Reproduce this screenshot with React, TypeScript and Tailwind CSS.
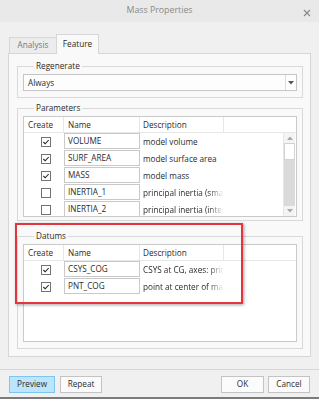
import React from 'react';

interface Row {
  on: boolean;
  name: string;
  desc: string;
  fade?: boolean;
}

const parameters: Row[] = [
  { on: true, name: 'VOLUME', desc: 'model volume' },
  { on: true, name: 'SURF_AREA', desc: 'model surface area' },
  { on: true, name: 'MASS', desc: 'model mass' },
  { on: false, name: 'INERTIA_1', desc: 'principal inertia (smallest)', fade: true },
  { on: false, name: 'INERTIA_2', desc: 'principal inertia (intermediate)', fade: true },
];

const datums: Row[] = [
  { on: true, name: 'CSYS_COG', desc: 'CSYS at CG, axes: principal', fade: true },
  { on: true, name: 'PNT_COG', desc: 'point at center of mass', fade: true },
];

function Check({ on }: { on: boolean }) {
  return (
    <svg width="10" height="10" viewBox="0 0 10 10" className="block">
      <rect x="0.5" y="0.5" width="9" height="9" fill="#fff" stroke="#737373" />
      {on && <polyline points="2.4,5 4.2,6.8 7.7,3" fill="none" stroke="#222" strokeWidth="1.1" />}
    </svg>
  );
}

function Group({ label, children, className }: { label: string; children: React.ReactNode; className?: string }) {
  return (
    <fieldset className={`border border-[#d9d9d9] px-[5px] ${className ?? ''}`}>
      <legend className="ml-[11px] px-[2px] leading-[12px] text-[#2b2b2b]">{label}</legend>
      {children}
    </fieldset>
  );
}

function PropTable({ rows, bodyH, scroll }: { rows: Row[]; bodyH: string; scroll?: boolean }) {
  return (
    <div className="mt-[2px] border border-[#c9c9c9] bg-white">
      {/* header */}
      <div className="flex h-[16px] items-center border-b border-[#e6e6e6] text-[#2b2b2b]">
        <div className="w-[40px] h-full border-r border-[#e6e6e6] pl-[4px] leading-[16px]">Create</div>
        <div className="w-[76px] h-full border-r border-[#e6e6e6] pl-[4px] leading-[16px]">Name</div>
        <div className="w-[84px] h-full border-r border-[#e6e6e6] pl-[3px] leading-[16px]">Description</div>
        <div className="flex-1" />
      </div>
      {/* body */}
      <div className={`flex ${bodyH} overflow-hidden`}>
        <div className="flex-1">
          {rows.map((r) => (
            <div key={r.name} className="flex h-[17px]">
              <div className="w-[40px] flex items-center justify-center pl-[4px]">
                <Check on={r.on} />
              </div>
              <div className="w-[76px] h-[16px] border border-[#c9c9c9] bg-white pl-[3px] leading-[14px] text-[#2b2b2b]">
                {r.name}
              </div>
              <div
                className={`w-[84px] overflow-hidden whitespace-nowrap pl-[3px] leading-[17px] text-[#2b2b2b] ${
                  r.fade ? '[mask-image:linear-gradient(to_right,black_82%,transparent)]' : ''
                }`}
              >
                {r.desc}
              </div>
            </div>
          ))}
        </div>
        {scroll && (
          <div className="w-[12px] mr-[1px] flex flex-col border-l border-[#e6e6e6] bg-[#f4f4f4]">
            <div className="h-[10px] flex items-center justify-center">
              <svg width="6" height="4" viewBox="0 0 6 4"><polygon points="0,4 6,4 3,0.5" fill="#a8a8a8" /></svg>
            </div>
            <div className="h-[17px] border border-[#d2d2d2] bg-white" />
            <div className="flex-1 bg-[#dadada]" />
            <div className="h-[10px] flex items-center justify-center">
              <svg width="6" height="4" viewBox="0 0 6 4"><polygon points="0,0 6,0 3,3.5" fill="#a8a8a8" /></svg>
            </div>
          </div>
        )}
      </div>
    </div>
  );
}

function Button({ children, primary, w }: { children: React.ReactNode; primary?: boolean; w: string }) {
  return (
    <div
      className={`${w} h-[17px] flex items-center justify-center border text-[#2b2b2b] ${
        primary ? 'bg-[#bde5fc] border-[#7ec6f2]' : 'bg-[#fbfbfb] border-[#c3c3c3]'
      }`}
    >
      {children}
    </div>
  );
}

export default function App() {
  return (
    <div
      className="relative w-[319px] h-[399px] overflow-hidden bg-[#f0f0f0] flex flex-col text-[8.2px]"
      style={{ fontFamily: '"Open Sans", "Noto Sans", sans-serif' }}
    >
      {/* Title bar */}
      <div className="h-[22px] shrink-0 bg-[#e9e9e9] flex items-center justify-center relative">
        <span className="text-[8.8px] text-[#8a8a8a]">Mass Properties</span>
        <svg width="8" height="8" viewBox="0 0 8 8" className="absolute right-[8px] top-[9px]">
          <path d="M1 1 L7 7 M7 1 L1 7" stroke="#8a8a8a" strokeWidth="1.2" />
        </svg>
      </div>

      {/* Tabs */}
      <div className="flex items-end pt-[12px] pl-[9px]">
        <div className="w-[47px] h-[16px] border border-b-0 border-r-0 border-[#d6d6d6] bg-[#ececec] text-[#777] flex items-center justify-center">
          Analysis
        </div>
        <div className="relative z-10 -mb-px w-[43px] h-[20px] border border-b-0 border-[#d6d6d6] bg-[#f9f9f9] text-[#2b2b2b] flex items-center justify-center">
          Feature
        </div>
      </div>

      {/* Tab panel */}
      <div className="mx-[8px] border border-[#d6d6d6] bg-[#f9f9f9] pl-[8px] pr-[7px] pt-[6px] pb-[7px]">
        <Group label="Regenerate" className="pb-[6px]">
          <div className="mt-[2px] h-[17px] flex border border-[#c6c6c6] bg-[#fdfdfd] text-[#2b2b2b]">
            <div className="flex-1 pl-[4px] leading-[15px]">Always</div>
            <div className="w-[11px] border-l border-[#dcdcdc] flex items-center justify-center">
              <svg width="6" height="4" viewBox="0 0 6 4"><polygon points="0,0 6,0 3,3.5" fill="#555" /></svg>
            </div>
          </div>
        </Group>

        <Group label="Parameters" className="mt-[4px] pb-[3px]">
          <PropTable rows={parameters} bodyH="h-[83px]" scroll />
        </Group>

        <Group label="Datums" className="mt-[9px] pb-[6px]">
          <PropTable rows={datums} bodyH="h-[80px]" />
        </Group>
      </div>

      {/* Footer */}
      <div className="mt-[12px] border-t border-[#d6d6d6] pt-[6px] px-[9px] flex items-center">
        <div className="flex gap-[5px]">
          <Button primary w="w-[46px]">Preview</Button>
          <Button w="w-[42px]">Repeat</Button>
        </div>
        <div className="ml-auto flex gap-[4px]">
          <Button w="w-[43px]">OK</Button>
          <Button w="w-[42px]">Cancel</Button>
        </div>
      </div>
      <div className="mt-auto h-[2px] bg-[#7b7b7b]" />

      {/* annotation box */}
      <div className="absolute left-[15px] top-[223px] w-[228px] h-[81px] border-2 border-[#e4343d] shadow-[1px_1px_3px_rgba(0,0,0,0.35)]" />
    </div>
  );
}
